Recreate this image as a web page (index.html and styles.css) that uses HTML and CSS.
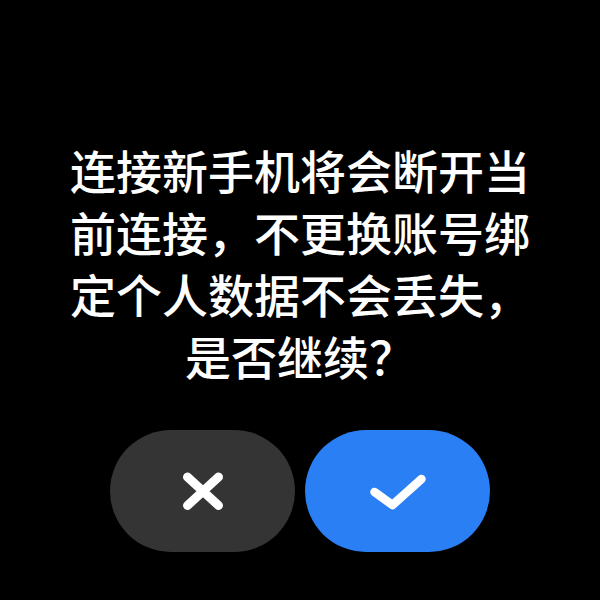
FILE: index.html
```html
<!DOCTYPE html>
<html lang="zh-CN">
<head>
<meta charset="utf-8">
<link rel="stylesheet" href="styles.css">
</head>
<body>
<main class="screen">
  <p class="message">连接新手机将会断开当前连接，不更换账号绑定个人数据不会丢失，是否继续？</p>
  <div class="actions">
    <button class="btn btn-cancel" aria-label="取消">
      <svg width="44" height="44" viewBox="0 0 44 44"><path d="M6.5 8 L37.5 36.5 M37.5 8 L6.5 36.5" fill="none" stroke="#fff" stroke-width="9" stroke-linecap="round"/></svg>
    </button>
    <button class="btn btn-ok" aria-label="确定">
      <svg width="64" height="44" viewBox="0 0 64 44"><path d="M8.5 23 L26.5 36 L55.5 10" fill="none" stroke="#fff" stroke-width="8.5" stroke-linecap="round" stroke-linejoin="round"/></svg>
    </button>
  </div>
</main>
</body>
</html>
```
FILE: styles.css
```css
html, body {
  margin: 0;
  padding: 0;
  background: #000;
}
.screen {
  width: 600px;
  height: 600px;
  display: flex;
  flex-direction: column;
  align-items: center;
}
.message {
  margin: 138px 0 0;
  width: 462px;
  color: #fff;
  font-family: "Noto Sans CJK SC", "Noto Sans", sans-serif;
  font-weight: 500;
  font-size: 46px;
  line-height: 62px;
  text-align: center;
}
.actions {
  margin-top: 44px;
  display: flex;
  gap: 10px;
}
.btn {
  width: 185px;
  height: 122px;
  border: none;
  border-radius: 61px;
  padding: 0;
  display: flex;
  align-items: center;
  justify-content: center;
}
.btn-cancel {
  background: #343434;
}
.btn-ok {
  background: #2a7ff4;
}
.btn svg {
  display: block;
}
```
